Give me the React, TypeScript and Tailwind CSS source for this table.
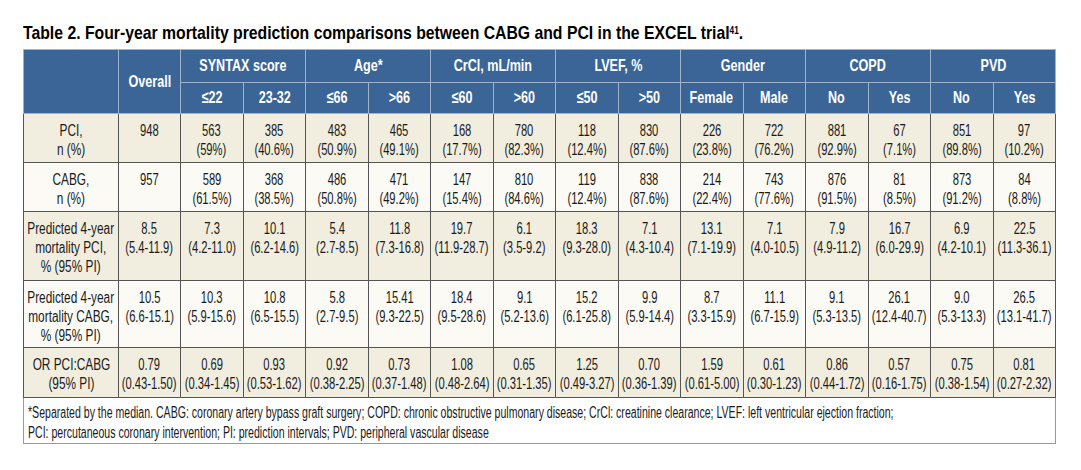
import React from 'react';

type Cell = [string, string?];

const groups = [
  { name: 'SYNTAX score', subs: ['≤22', '23-32'] },
  { name: 'Age*', subs: ['≤66', '>66'] },
  { name: 'CrCl, mL/min', subs: ['≤60', '>60'] },
  { name: 'LVEF, %', subs: ['≤50', '>50'] },
  { name: 'Gender', subs: ['Female', 'Male'] },
  { name: 'COPD', subs: ['No', 'Yes'] },
  { name: 'PVD', subs: ['No', 'Yes'] },
];

const rows: { label: string[]; h: string; bg: string; cells: Cell[] }[] = [
  {
    label: ['PCI,', 'n (%)'],
    h: 'h-[49px]',
    bg: 'bg-[#f1eee0]',
    cells: [
      ['948'], ['563', '(59%)'], ['385', '(40.6%)'], ['483', '(50.9%)'], ['465', '(49.1%)'],
      ['168', '(17.7%)'], ['780', '(82.3%)'], ['118', '(12.4%)'], ['830', '(87.6%)'],
      ['226', '(23.8%)'], ['722', '(76.2%)'], ['881', '(92.9%)'], ['67', '(7.1%)'],
      ['851', '(89.8%)'], ['97', '(10.2%)'],
    ],
  },
  {
    label: ['CABG,', 'n (%)'],
    h: 'h-[49px]',
    bg: 'bg-[#fbfaf5]',
    cells: [
      ['957'], ['589', '(61.5%)'], ['368', '(38.5%)'], ['486', '(50.8%)'], ['471', '(49.2%)'],
      ['147', '(15.4%)'], ['810', '(84.6%)'], ['119', '(12.4%)'], ['838', '(87.6%)'],
      ['214', '(22.4%)'], ['743', '(77.6%)'], ['876', '(91.5%)'], ['81', '(8.5%)'],
      ['873', '(91.2%)'], ['84', '(8.8%)'],
    ],
  },
  {
    label: ['Predicted 4-year', 'mortality PCI,', '% (95% PI)'],
    h: 'h-[69px]',
    bg: 'bg-[#f1eee0]',
    cells: [
      ['8.5', '(5.4-11.9)'], ['7.3', '(4.2-11.0)'], ['10.1', '(6.2-14.6)'], ['5.4', '(2.7-8.5)'],
      ['11.8', '(7.3-16.8)'], ['19.7', '(11.9-28.7)'], ['6.1', '(3.5-9.2)'], ['18.3', '(9.3-28.0)'],
      ['7.1', '(4.3-10.4)'], ['13.1', '(7.1-19.9)'], ['7.1', '(4.0-10.5)'], ['7.9', '(4.9-11.2)'],
      ['16.7', '(6.0-29.9)'], ['6.9', '(4.2-10.1)'], ['22.5', '(11.3-36.1)'],
    ],
  },
  {
    label: ['Predicted 4-year', 'mortality CABG,', '% (95% PI)'],
    h: 'h-[67px]',
    bg: 'bg-[#fbfaf5]',
    cells: [
      ['10.5', '(6.6-15.1)'], ['10.3', '(5.9-15.6)'], ['10.8', '(6.5-15.5)'], ['5.8', '(2.7-9.5)'],
      ['15.41', '(9.3-22.5)'], ['18.4', '(9.5-28.6)'], ['9.1', '(5.2-13.6)'], ['15.2', '(6.1-25.8)'],
      ['9.9', '(5.9-14.4)'], ['8.7', '(3.3-15.9)'], ['11.1', '(6.7-15.9)'], ['9.1', '(5.3-13.5)'],
      ['26.1', '(12.4-40.7)'], ['9.0', '(5.3-13.3)'], ['26.5', '(13.1-41.7)'],
    ],
  },
  {
    label: ['OR PCI:CABG', '(95% PI)'],
    h: 'h-[50px]',
    bg: 'bg-[#f1eee0]',
    cells: [
      ['0.79', '(0.43-1.50)'], ['0.69', '(0.34-1.45)'], ['0.93', '(0.53-1.62)'], ['0.92', '(0.38-2.25)'],
      ['0.73', '(0.37-1.48)'], ['1.08', '(0.48-2.64)'], ['0.65', '(0.31-1.35)'], ['1.25', '(0.49-3.27)'],
      ['0.70', '(0.36-1.39)'], ['1.59', '(0.61-5.00)'], ['0.61', '(0.30-1.23)'], ['0.86', '(0.44-1.72)'],
      ['0.57', '(0.16-1.75)'], ['0.75', '(0.38-1.54)'], ['0.81', '(0.27-2.32)'],
    ],
  },
];

// condensed face isn't installed, so narrow Arial-metric text horizontally
const Narrow = ({ children, s = 'scale-x-[0.7]' }: { children: React.ReactNode; s?: string }) => (
  <div className="flex justify-center">
    <div className={`${s} whitespace-nowrap text-center shrink-0`}>{children}</div>
  </div>
);

export default function App() {
  return (
    <div className="w-[1081px] h-[470px] overflow-hidden bg-white pl-[23px] pt-[23px] text-black font-['Liberation_Sans',Arial,sans-serif]">
      {/* Caption */}
      <div className="h-[26px] w-[1033px]">
        <h1 className="origin-left scale-x-[0.83] whitespace-nowrap text-[19px] leading-[20px] font-bold">
          Table 2. Four-year mortality prediction comparisons between CABG and PCI in the EXCEL trial
          <sup className="text-[10px]">41</sup>.
        </h1>
      </div>

      <table className="table-fixed border-collapse w-[1033px] border border-[#9a9a9a]">
        <colgroup>
          <col className="w-[95px]" />
          <col className="w-[62px]" />
          {Array.from({ length: 14 }).map((_, i) => (
            <col key={i} />
          ))}
        </colgroup>
        <thead className="bg-[#3b6596] text-white font-bold text-[17px] leading-[18px]">
          <tr className="h-[33px]">
            <th rowSpan={2} className="border border-[#9fb3cb]"></th>
            <th rowSpan={2} className="border border-[#9fb3cb]">
              <Narrow s="scale-x-[0.74]">Overall</Narrow>
            </th>
            {groups.map((g) => (
              <th key={g.name} colSpan={2} className="border border-[#9fb3cb]">
                <Narrow s="scale-x-[0.74]">{g.name}</Narrow>
              </th>
            ))}
          </tr>
          <tr className="h-[31px]">
            {groups.flatMap((g) =>
              g.subs.map((s, i) => (
                <th key={g.name + i} className="border border-[#9fb3cb]">
                  <Narrow s="scale-x-[0.74]">{s}</Narrow>
                </th>
              ))
            )}
          </tr>
        </thead>
        <tbody className="text-[16px] leading-[19px] text-[#1a1a1a]">
          {rows.map((r, ri) => (
            <tr key={ri} className={`${r.h} ${r.bg}`}>
              <td className="border border-[#555] align-top pt-[7px]">
                <Narrow s="scale-x-[0.74]">
                  {r.label.map((l) => (
                    <div key={l}>{l}</div>
                  ))}
                </Narrow>
              </td>
              {r.cells.map((c, ci) => (
                <td key={ci} className="border border-[#555] align-top pt-[7px]">
                  <Narrow>
                    <div>{c[0]}</div>
                    {c[1] && <div>{c[1]}</div>}
                  </Narrow>
                </td>
              ))}
            </tr>
          ))}
          <tr className="h-[46px] bg-white">
            <td colSpan={16} className="border border-[#9a9a9a] align-top pl-[4px] pt-[5px] text-[16px] leading-[20px]">
              <div className="origin-left scale-x-[0.66] whitespace-nowrap">
                <div>
                  *Separated by the median. CABG: coronary artery bypass graft surgery; COPD: chronic obstructive pulmonary disease; CrCl: creatinine clearance; LVEF: left ventricular ejection fraction;
                </div>
                <div>PCI: percutaneous coronary intervention; PI: prediction intervals; PVD: peripheral vascular disease</div>
              </div>
            </td>
          </tr>
        </tbody>
      </table>
    </div>
  );
}
